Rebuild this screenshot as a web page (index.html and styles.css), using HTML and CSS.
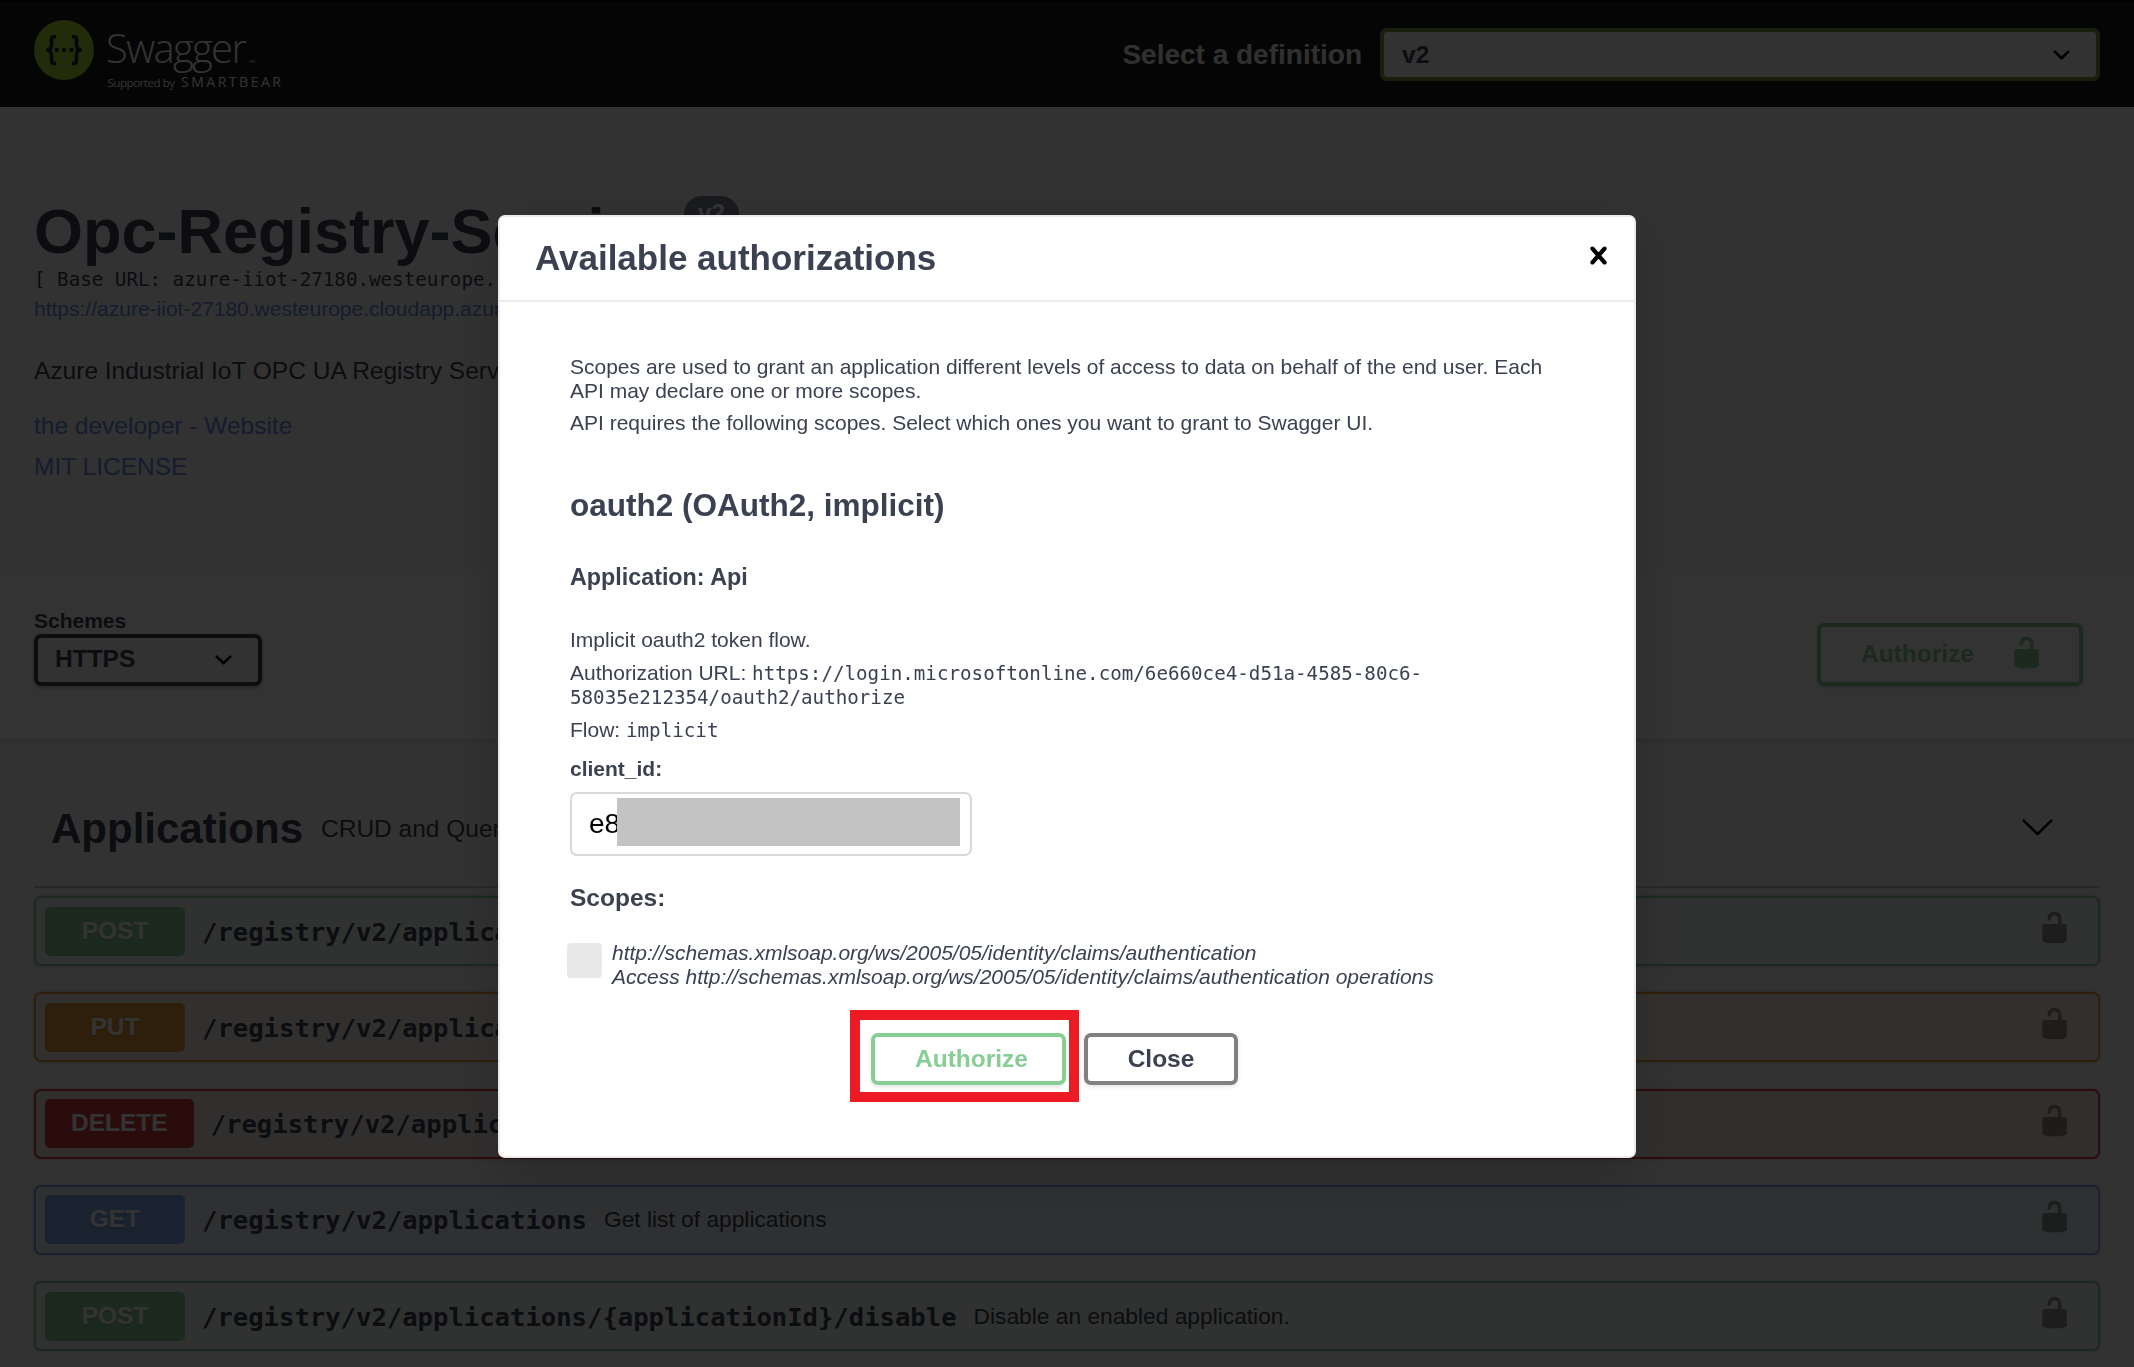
FILE: index.html
```html
<!DOCTYPE html>
<html lang="en">
<head>
<meta charset="utf-8">
<title>Swagger UI</title>
<link rel="stylesheet" href="styles.css">
</head>
<body>
<svg class="defs" width="0" height="0">
  <symbol id="unlocked" viewBox="0 0 20 20"><path d="M15.8 8H14V5.6C14 2.703 12.665 1 10 1 7.334 1 6 2.703 6 5.6V6h2v-.801C8 3.754 8.797 3 10 3c1.203 0 2 .754 2 2.199V8H4c-.553 0-1 .646-1 1.199V17c0 .549.428 1.139.951 1.307l1.197.387C5.672 18.861 6.55 19 7.1 19h5.8c.549 0 1.428-.139 1.951-.307l1.196-.387c.524-.167.953-.757.953-1.306V9.199C17 8.646 16.352 8 15.8 8z"/></symbol>
  <symbol id="select-arrow" viewBox="0 0 20 20"><path d="M13.418 7.859c.271-.268.709-.268.978 0 .27.268.272.701 0 .969l-3.908 3.83c-.27.268-.707.268-.979 0l-3.908-3.83c-.27-.267-.27-.701 0-.969.271-.268.709-.268.978 0L10 11l3.418-3.141z"/></symbol>
  <symbol id="large-arrow" viewBox="0 0 20 20"><path d="M17.418 6.109c.272-.268.709-.268.979 0s.271.701 0 .969l-7.908 7.83c-.27.268-.707.268-.979 0l-7.908-7.83c-.27-.268-.27-.701 0-.969.271-.268.709-.268.979 0L10 13.25l7.418-7.141z"/></symbol>
  <symbol id="close" viewBox="0 0 20 20"><path d="M14.348 14.849c-.469.469-1.229.469-1.697 0L10 11.819l-2.651 3.029c-.469.469-1.229.469-1.697 0-.469-.469-.469-1.229 0-1.697l2.758-3.15-2.759-3.152c-.469-.469-.469-1.228 0-1.697.469-.469 1.228-.469 1.697 0L10 8.183l2.651-3.031c.469-.469 1.228-.469 1.697 0 .469.469.469 1.229 0 1.697l-2.758 3.152 2.758 3.15c.469.469.469 1.229 0 1.698z"/></symbol>
</svg>
<div class="page">
  <header class="topbar">
    <svg class="logo" width="260" height="105" viewBox="34 2 260 105">
      <circle cx="64" cy="50" r="30" fill="#aad832"/>
      <g fill="none" stroke="#1b2b33" stroke-width="3.600">
        <path d="M56 36.800h-2c-2.500-.2-2.500 1.600-2.500 4v4c0 3-1.500 5.200-5 5.200 3.500 0 5 2.200 5 5.200v4c0 2.400 0 4.400 2.500 4.200h2"/>
        <path d="M72 36.800h2c2.500-.2 2.500 1.600 2.500 4v4c0 3 1.500 5.200 5 5.200-3.500 0-5 2.200-5 5.200v4c0 2.400 0 4.400-2.500 4.200h-2"/>
      </g>
      <g fill="#1b2b33"><circle cx="56.800" cy="50" r="2.200"/><circle cx="64" cy="50" r="2.200"/><circle cx="71.500" cy="50" r="2.200"/></g>
      <text class="logo-name" x="106" y="63" textLength="141">Swagger</text>
      <text class="logo-tm" x="249" y="63">TM</text>
      <text class="logo-by" x="107.500" y="87" textLength="67.500">Supported by</text>
      <text class="logo-bear" x="181" y="87" textLength="100">SMARTBEAR</text>
    </svg>
    <label class="def-label">Select a definition</label>
    <div class="select def-select"><span>v2</span><svg class="icon"><use href="#select-arrow"/></svg></div>
  </header>

  <section class="info">
    <h1 class="title"><span>Opc-Registry-Service</span><span class="version">v2</span></h1>
    <div class="base-url">[ Base URL: azure-iiot-27180.westeurope.cloudapp.azure.com ]</div>
    <a class="link spec">https://azure-iiot-27180.westeurope.cloudapp.azure.com</a>
    <p class="description">Azure Industrial IoT OPC UA Registry Service</p>
    <a class="link contact">the developer - Website</a>
    <a class="link license">MIT LICENSE</a>
  </section>

  <section class="schemes">
    <div class="scheme-box">
      <label class="scheme-label">Schemes</label>
      <div class="select scheme-select"><span>HTTPS</span><svg class="icon"><use href="#select-arrow"/></svg></div>
    </div>
    <div class="btn btn-top"><span>Authorize</span><svg class="icon"><use href="#unlocked"/></svg></div>
  </section>

  <section class="tag">
    <div class="tag-head">
      <h2 class="tag-name">Applications</h2>
      <span class="tag-desc">CRUD and Query</span>
      <svg class="icon tag-arrow"><use href="#large-arrow"/></svg>
    </div>
    <div class="ops">
      <div class="op post"><span class="method">POST</span><span class="path">/registry/v2/applications</span><svg class="icon"><use href="#unlocked"/></svg></div>
      <div class="op put"><span class="method">PUT</span><span class="path">/registry/v2/applications</span><svg class="icon"><use href="#unlocked"/></svg></div>
      <div class="op delete"><span class="method">DELETE</span><span class="path">/registry/v2/applications</span><svg class="icon"><use href="#unlocked"/></svg></div>
      <div class="op get"><span class="method">GET</span><span class="path">/registry/v2/applications</span><span class="sum">Get list of applications</span><svg class="icon"><use href="#unlocked"/></svg></div>
      <div class="op post"><span class="method">POST</span><span class="path">/registry/v2/applications/{applicationId}/disable</span><span class="sum">Disable an enabled application.</span><svg class="icon"><use href="#unlocked"/></svg></div>
    </div>
  </section>
</div>

<div class="backdrop">
  <div class="modal">
    <div class="modal-head">
      <h3 class="modal-title">Available authorizations</h3>
      <svg class="icon"><use href="#close"/></svg>
    </div>
    <div class="modal-body">
      <p class="scope-def">Scopes are used to grant an application different levels of access to data on behalf of the end user. Each API may declare one or more scopes.</p>
      <p class="scope-req">API requires the following scopes. Select which ones you want to grant to Swagger UI.</p>
      <h4 class="auth-name">oauth2 (OAuth2, implicit)</h4>
      <h5 class="app-name">Application: Api</h5>
      <p class="flow-desc">Implicit oauth2 token flow.</p>
      <p class="auth-url">Authorization URL: <code>https://login.microsoftonline.com/6e660ce4-d51a-4585-80c6-<wbr>58035e212354/oauth2/authorize</code></p>
      <p class="flow">Flow: <code>implicit</code></p>
      <label class="client-label">client_id:</label>
      <div class="client-input"><span>e8</span><div class="redaction"></div></div>
      <h5 class="scopes-title">Scopes:</h5>
      <div class="scope">
        <span class="checkbox"></span>
        <p>http://schemas.xmlsoap.org/ws/2005/05/identity/claims/authentication<br>Access http://schemas.xmlsoap.org/ws/2005/05/identity/claims/authentication operations</p>
      </div>
      <div class="actions">
        <div class="marked"><div class="btn btn-auth">Authorize</div><div class="marker"></div></div>
        <div class="btn btn-close">Close</div>
      </div>
    </div>
  </div>
</div>
</body>
</html>
```
FILE: styles.css
```css
* { box-sizing: border-box; }
body { margin: 0; font-family: "Liberation Sans", Arial, sans-serif; color: #3b4151; background: #fafafa; }
h1, h2, h3, h4, h5, p { margin: 0; }
.defs { display: none; }
.page { width: 2134px; height: 1367px; overflow: hidden; background: #fafafa; }
.icon { width: 35px; height: 35px; flex: none; }

.topbar { display: flex; align-items: center; height: 107px; padding: 0 34px; background: #1b1b1b; border-top: 2px solid #000; }
.logo { flex: none; font-family: "Open Sans", sans-serif; fill: #fff; }
.logo-name { font-size: 40px; font-weight: 350; }
.logo-tm { font-size: 4px; }
.logo-by { font-size: 11.500px; }
.logo-bear { font-size: 14px; font-weight: 500; }
.def-label { margin-left: auto; margin-right: 18px; font-size: 28px; font-weight: 700; color: #f0f0f0; }

.select { display: flex; align-items: center; justify-content: space-between; border: 4px solid #41444e; border-radius: 7px; padding-left: 18px; font-size: 24.500px; font-weight: 700; background: #f7f7f7; }
.def-select { width: 720px; height: 53px; border-color: #7d9a4e; padding-right: 17px; }

.info { height: 463px; padding: 89px 34px 0; display: flex; flex-direction: column; align-items: flex-start; white-space: nowrap; }
.title { display: flex; align-items: flex-start; gap: 9px; height: 70px; font-size: 63px; line-height: 70px; }
.version { height: 37px; padding: 0 14px; border-radius: 18px; background: #7d8492; color: #fff; font-size: 24.500px; line-height: 33px; }
.base-url { margin-top: 1px; font: 19.200px/26px "DejaVu Sans Mono", monospace; }
.link { color: #6a8ce0; font-size: 24.500px; line-height: 30px; }
.spec { margin-top: 2px; font-size: 21px; line-height: 28px; }
.description { margin-top: 33px; font-size: 24.500px; line-height: 30px; }
.contact { margin-top: 25px; }
.license { margin-top: 11px; }

.schemes { display: flex; justify-content: space-between; align-items: flex-start; height: 169px; padding: 39px 51px 0 34px; background: #fff; box-shadow: 0 2px 4px rgba(0,0,0,.15); }
.scheme-box { display: flex; flex-direction: column; }
.scheme-label { font-size: 21px; font-weight: 700; line-height: 24px; }
.scheme-select { width: 228px; height: 52px; margin-top: 1px; padding: 0 17px 2px; box-shadow: 0 2px 4px rgba(0,0,0,.25); }

.btn { display: flex; align-items: center; justify-content: center; border: 4px solid #808080; border-radius: 7px; font-size: 24.500px; font-weight: 700; box-shadow: 0 2px 4px rgba(0,0,0,.1); }
.btn-top { width: 266px; height: 63px; margin-top: 14px; padding: 0 35px 2px 40px; justify-content: space-between; border-color: #8bcd99; color: #8bcd99; fill: #8bcd99; }
.btn-top .icon { margin-bottom: 2px; }

.tag { padding: 34px 34px 0; }
.tag-head { display: flex; align-items: center; height: 115px; padding: 0 45px 1px 17px; border-bottom: 2px solid #c8c8c8; }
.tag-name { font-size: 42px; }
.tag-desc { margin-left: 18px; font-size: 24.500px; white-space: nowrap; }
.tag-arrow { margin: 0 0 6px auto; }
.ops { display: flex; flex-direction: column; gap: 26.280px; padding-top: 8px; }
.op { display: flex; align-items: center; flex: none; height: 70px; padding: 0 26px 0 9px; border: 2px solid; border-radius: 7px; box-shadow: 0 0 5px rgba(0,0,0,.19); }
.method { min-width: 140px; height: 49px; padding: 0 26px; border-radius: 5px; text-align: center; color: #fff; font-size: 24.500px; font-weight: 700; line-height: 47px; text-shadow: 0 2px 0 rgba(0,0,0,.1); }
.path { margin-left: 17px; font: 700 25.580px/30px "DejaVu Sans Mono", monospace; padding-top: 1px; }
.sum { margin-left: 17px; font-size: 22.750px; }
.op .icon { margin: 0 0 7px auto; opacity: .4; fill: #000; }
.post { border-color: #8bcd99; background: #f1f5f2; }
.post .method { background: #8bcd99; }
.put { border-color: #e19b37; background: #f8f1e6; }
.put .method { background: #e19b37; }
.delete { border-color: #d73c3c; background: #f2ebe6; }
.delete .method { background: #d73c3c; }
.get { border-color: #80aaf0; background: #ebf0f5; }
.get .method { background: #80aaf0; }

.backdrop { position: fixed; inset: 0; display: flex; justify-content: center; align-items: flex-start; padding-top: 215px; background: rgba(0,0,0,.8); }
.modal { width: 1138px; height: 943px; border: 2px solid #ebebeb; border-radius: 7px; background: #fff; box-shadow: 0 18px 53px rgba(0,0,0,.2); }
.modal-head { display: flex; justify-content: space-between; align-items: center; height: 85px; padding: 0 18px 2px 35px; border-bottom: 2px solid #ebebeb; }
.modal-title { font-size: 35px; }
.modal-head .icon { margin-bottom: 5px; }
.modal-body { display: flex; flex-direction: column; padding: 53px 70px 0; font-size: 21px; line-height: 24px; }
.modal code { font: 19.200px/20px "DejaVu Sans Mono", monospace; }
.scope-req { margin-top: 8px; }
.auth-name { margin-top: 52px; font-size: 31.500px; line-height: 36px; }
.app-name { margin-top: 41px; font-size: 23.300px; line-height: 26px; }
.flow-desc { margin-top: 38px; }
.auth-url { margin-top: 9px; }
.flow { margin-top: 9px; }
.client-label { margin-top: 15px; font-weight: 700; }
.client-input { position: relative; width: 402px; height: 64px; margin-top: 11px; padding-left: 17px; border: 2px solid #d9d9d9; border-radius: 7px; color: #000; font-size: 28px; line-height: 59px; }
.redaction { position: absolute; left: 45px; top: 4px; width: 343px; height: 48px; background: #c3c3c3; }
.scopes-title { margin-top: 28px; font-size: 24.500px; line-height: 28px; }
.scope { display: flex; align-items: flex-start; gap: 10px; margin: 29px 0 0 -3px; font-style: italic; white-space: nowrap; }
.checkbox { width: 35px; height: 35px; margin-top: 2px; border-radius: 4px; background: #e8e8e8; }
.actions { display: flex; gap: 18px; margin: 44px 0 0 301px; }
.marked { position: relative; }
.marker { position: absolute; left: -21px; top: -23px; width: 229px; height: 92px; border: 10px solid #ed1c24; }
.btn-auth { width: 195px; height: 52px; padding-left: 6px; border-color: #86ce94; color: #86ce94; }
.btn-close { width: 154px; height: 52px; }
```
